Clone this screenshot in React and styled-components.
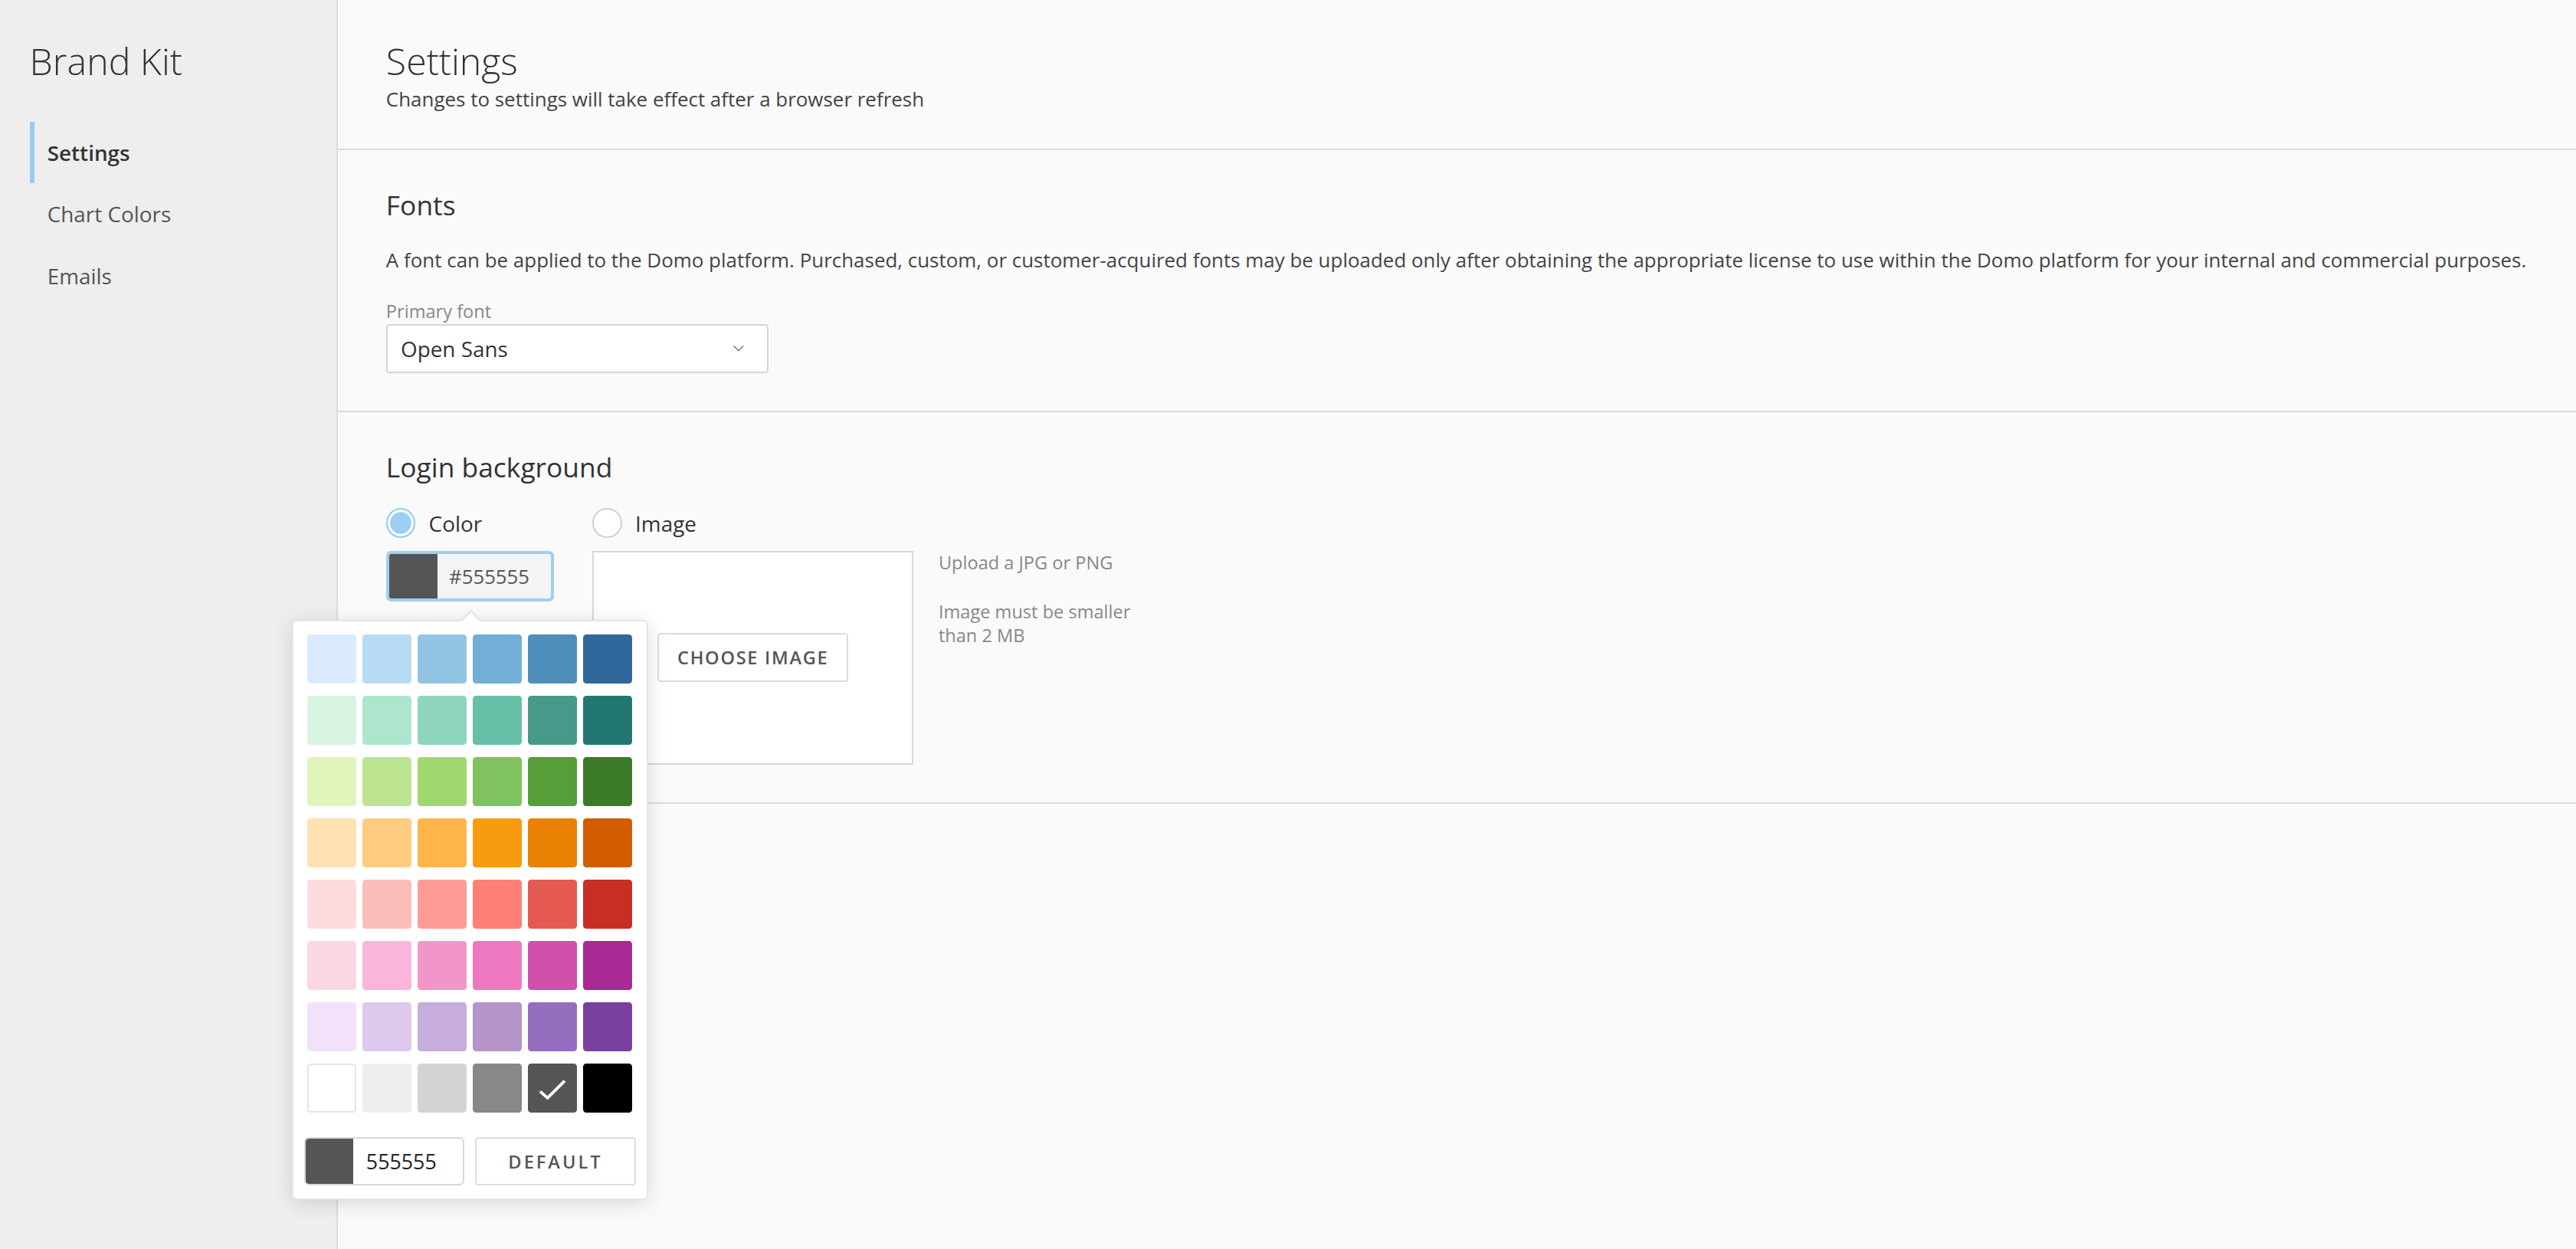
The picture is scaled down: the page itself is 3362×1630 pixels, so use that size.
import React from 'react';
import styled, { createGlobalStyle } from 'styled-components';
import { ChevronDown } from 'lucide-react';

const PALETTE = [
  ['#d9eafc', '#b8dbf4', '#92c4e4', '#72aed6', '#4d8eba', '#31689b'],
  ['#d8f4e1', '#ace6cc', '#8dd6bd', '#67bfa7', '#47998a', '#227870'],
  ['#e0f4bb', '#bde591', '#a2d770', '#80c25d', '#559e38', '#3b7b28'],
  ['#fee2b2', '#ffcc80', '#feb64b', '#f89b10', '#e98105', '#d15d00'],
  ['#fddcde', '#fbbdb7', '#fc9c94', '#fd7f76', '#e45950', '#c92e25'],
  ['#fbd7e5', '#fab5dd', '#f296ca', '#ee78c0', '#d050ac', '#a82a94'],
  ['#f1e1fb', '#dec8ee', '#c6addc', '#b494c9', '#946fc0', '#7a40a0'],
  ['#ffffff', '#eeeeee', '#d4d4d4', '#888888', '#555555', '#000000'],
];

const SELECTED = '#555555';

function App() {
  return (
    <>
      <GlobalStyle />
      <Page>
        <Sidebar>
          <BrandTitle>Brand Kit</BrandTitle>
          <Nav>
            <NavItem $active>Settings</NavItem>
            <NavItem>Chart Colors</NavItem>
            <NavItem>Emails</NavItem>
          </Nav>
        </Sidebar>

        <Main>
          <Header>
            <PageTitle>Settings</PageTitle>
            <Subtitle>Changes to settings will take effect after a browser refresh</Subtitle>
          </Header>

          <Section>
            <SectionTitle>Fonts</SectionTitle>
            <Description>
              A font can be applied to the Domo platform. Purchased, custom, or customer-acquired fonts may be
              uploaded only after obtaining the appropriate license to use within the Domo platform for your
              internal and commercial purposes.
            </Description>
            <FieldLabel>Primary font</FieldLabel>
            <Select>
              <span>Open Sans</span>
              <ChevronDown size={11} strokeWidth={1.5} color="#777" />
            </Select>
          </Section>

          <Section>
            <SectionTitle>Login background</SectionTitle>
            <OptionsGrid>
              <RadioOption>
                <RadioCircle $checked />
                Color
              </RadioOption>
              <RadioOption>
                <RadioCircle />
                Image
              </RadioOption>
              <div />

              <ColorField>
                <ColorInput>
                  <ColorChip $color={SELECTED} />
                  <ColorText>#555555</ColorText>
                </ColorInput>

                <Popover>
                  <SwatchGrid>
                    {PALETTE.flat().map((c, i) => (
                      <Swatch key={i} $color={c}>
                        {c === SELECTED && (
                          <svg width="30" height="30" viewBox="0 0 30 30">
                            <polyline
                              points="7.5,17 12,21 22.5,10.5"
                              fill="none"
                              stroke="#fff"
                              strokeWidth="1.8"
                            />
                          </svg>
                        )}
                      </Swatch>
                    ))}
                  </SwatchGrid>
                  <PopoverFooter>
                    <HexInput>
                      <ColorChip $color={SELECTED} $small />
                      <HexText>555555</HexText>
                    </HexInput>
                    <OutlineButton $wide>DEFAULT</OutlineButton>
                  </PopoverFooter>
                </Popover>
              </ColorField>

              <ImageDrop>
                <OutlineButton>CHOOSE IMAGE</OutlineButton>
              </ImageDrop>

              <UploadHint>
                <p>Upload a JPG or PNG</p>
                <p>Image must be smaller than 2 MB</p>
              </UploadHint>
            </OptionsGrid>
          </Section>
        </Main>
      </Page>
    </>
  );
}

const GlobalStyle = createGlobalStyle`
  html, body {
    margin: 0;
    padding: 0;
    background: #fafafa;
    overflow: hidden;
  }

  * {
    box-sizing: border-box;
  }
`;

const Page = styled.div`
  zoom: 2.1441;
  width: 1568px;
  height: 761px;

  display: flex;

  font-family: 'Open Sans', 'Noto Sans', sans-serif;
  color: #333;
  background: #fafafa;
`;

const Sidebar = styled.aside`
  width: 205.5px;
  flex-shrink: 0;
  padding-top: 22px;

  background: #eeeeee;
  border-right: 1px solid #dcdcdc;
`;

const BrandTitle = styled.div`
  margin-left: 18px;

  font-size: 22.5px;
  font-weight: 300;
  line-height: 30px;
  color: #333;
`;

const Nav = styled.nav`
  margin: 22px 0 0 18px;

  display: flex;
  flex-direction: column;
`;

const NavItem = styled.div`
  height: 37.5px;
  padding-left: 8px;

  display: flex;
  align-items: center;

  border-left: 3px solid ${(props) => (props.$active ? '#9bcbef' : 'transparent')};

  font-size: 13px;
  font-weight: ${(props) => (props.$active ? 600 : 400)};
  color: ${(props) => (props.$active ? '#333' : '#555')};
`;

const Main = styled.main`
  flex: 1;
  min-width: 0;
  display: flex;
  flex-direction: column;
`;

const Header = styled.header`
  padding: 22px 20px 21.5px 29.5px;
  border-bottom: 1px solid #dcdcdc;
`;

const PageTitle = styled.h1`
  margin: 0;

  font-size: 22.5px;
  font-weight: 300;
  line-height: 30px;
  color: #333;
`;

const Subtitle = styled.div`
  font-size: 12.1px;
  line-height: 17px;
  color: #444;
`;

const Section = styled.section`
  padding: 21.5px 20px 23px 29.5px;
  border-bottom: 1px solid #dcdcdc;
`;

const SectionTitle = styled.h2`
  margin: 0;

  font-size: 16.5px;
  font-weight: 400;
  line-height: 24px;
  color: #333;
`;

const Description = styled.p`
  margin: 13px 0 0;

  font-size: 12.1px;
  line-height: 17px;
  white-space: nowrap;
  color: #444;
`;

const FieldLabel = styled.div`
  margin-top: 15px;

  font-size: 11px;
  line-height: 15px;
  color: #888;
`;

const Select = styled.div`
  width: 233px;
  height: 29.5px;
  margin-top: 0.5px;
  padding: 0 12px 0 8px;

  display: flex;
  align-items: center;
  justify-content: space-between;

  background: #fff;
  border: 1px solid #d4d4d4;
  border-radius: 2px;

  font-size: 13px;
  color: #333;
`;

const OptionsGrid = styled.div`
  margin-top: 13px;

  display: grid;
  grid-template-columns: 125.7px 195.3px 1fr;
  row-gap: 8px;
`;

const RadioOption = styled.label`
  height: 18px;

  display: flex;
  align-items: center;
  gap: 8px;

  font-size: 13px;
  color: #333;
`;

const RadioCircle = styled.span`
  width: 18px;
  height: 18px;
  flex-shrink: 0;

  border-radius: 50%;
  border: 1px solid ${(props) => (props.$checked ? '#9accef' : '#cfcfcf')};
  background: ${(props) => (props.$checked ? '#9ccff1' : '#fff')};
  box-shadow: ${(props) => (props.$checked ? 'inset 0 0 0 1.5px #fff' : 'none')};
`;

const ColorField = styled.div`
  position: relative;
  width: 102px;
  height: 31px;
`;

const ColorInput = styled.div`
  height: 100%;

  display: flex;
  align-items: stretch;

  background: #f4f4f4;
  border: 2px solid #9dcff0;
  border-radius: 3px;
  overflow: hidden;
`;

const ColorChip = styled.span`
  width: ${(props) => (props.$small ? '29px' : '29.5px')};
  flex-shrink: 0;
  background: ${(props) => props.$color};
`;

const ColorText = styled.span`
  padding-left: 7px;

  display: flex;
  align-items: center;

  font-size: 12px;
  color: #555;
`;

const Popover = styled.div`
  position: absolute;
  top: calc(100% + 11px);
  left: 50%;
  margin-left: -108.5px;
  z-index: 10;

  width: 217px;
  padding: 8px 0 8px;

  background: #fff;
  border: 1px solid #e6e6e6;
  border-radius: 3px;
  box-shadow: 0 2px 12px rgba(0, 0, 0, 0.13);

  &::before {
    content: '';
    position: absolute;
    top: -5px;
    left: 50%;
    width: 8px;
    height: 8px;
    margin-left: -4px;

    background: #fff;
    border-top: 1px solid #e2e2e2;
    border-left: 1px solid #e2e2e2;
    transform: rotate(45deg);
  }
`;

const SwatchGrid = styled.div`
  padding: 0 8.5px;

  display: grid;
  grid-template-columns: repeat(6, 29.85px);
  grid-auto-rows: 29.8px;
  column-gap: 3.73px;
  row-gap: 7.5px;
`;

const Swatch = styled.div`
  display: flex;
  align-items: center;
  justify-content: center;

  background: ${(props) => props.$color};
  border: ${(props) => (props.$color === '#ffffff' ? '1px solid #e4e4e4' : 'none')};
  border-radius: 2px;
`;

const PopoverFooter = styled.div`
  margin-top: 15px;
  padding: 0 6.5px;

  display: grid;
  grid-template-columns: 1fr 1fr;
  column-gap: 6.4px;
`;

const HexInput = styled.div`
  height: 29.5px;

  display: flex;
  align-items: stretch;

  background: #fff;
  border: 1px solid #d8d8d8;
  border-radius: 3px;
  overflow: hidden;
`;

const HexText = styled.span`
  padding-left: 8px;

  display: flex;
  align-items: center;

  font-size: 12.5px;
  color: #222;
`;

const OutlineButton = styled.button`
  height: ${(props) => (props.$wide ? '29.5px' : '30px')};
  padding: 0 11px;

  background: #fff;
  border: 1px solid #dcdcdc;
  border-radius: 2px;

  font-family: 'Open Sans', 'Noto Sans', sans-serif;
  font-size: 11px;
  font-weight: 600;
  letter-spacing: ${(props) => (props.$wide ? '1.4px' : '0.8px')};
  color: #555;
`;

const ImageDrop = styled.div`
  width: 195.3px;
  height: 130px;

  display: flex;
  align-items: center;
  justify-content: center;

  background: #fff;
  border: 1px solid #d8d8d8;
`;

const UploadHint = styled.div`
  max-width: 140px;
  padding-left: 15.3px;

  font-size: 11px;
  line-height: 14.6px;
  color: #888;

  p {
    margin: 0 0 15.2px;
  }
`;

export default App;
